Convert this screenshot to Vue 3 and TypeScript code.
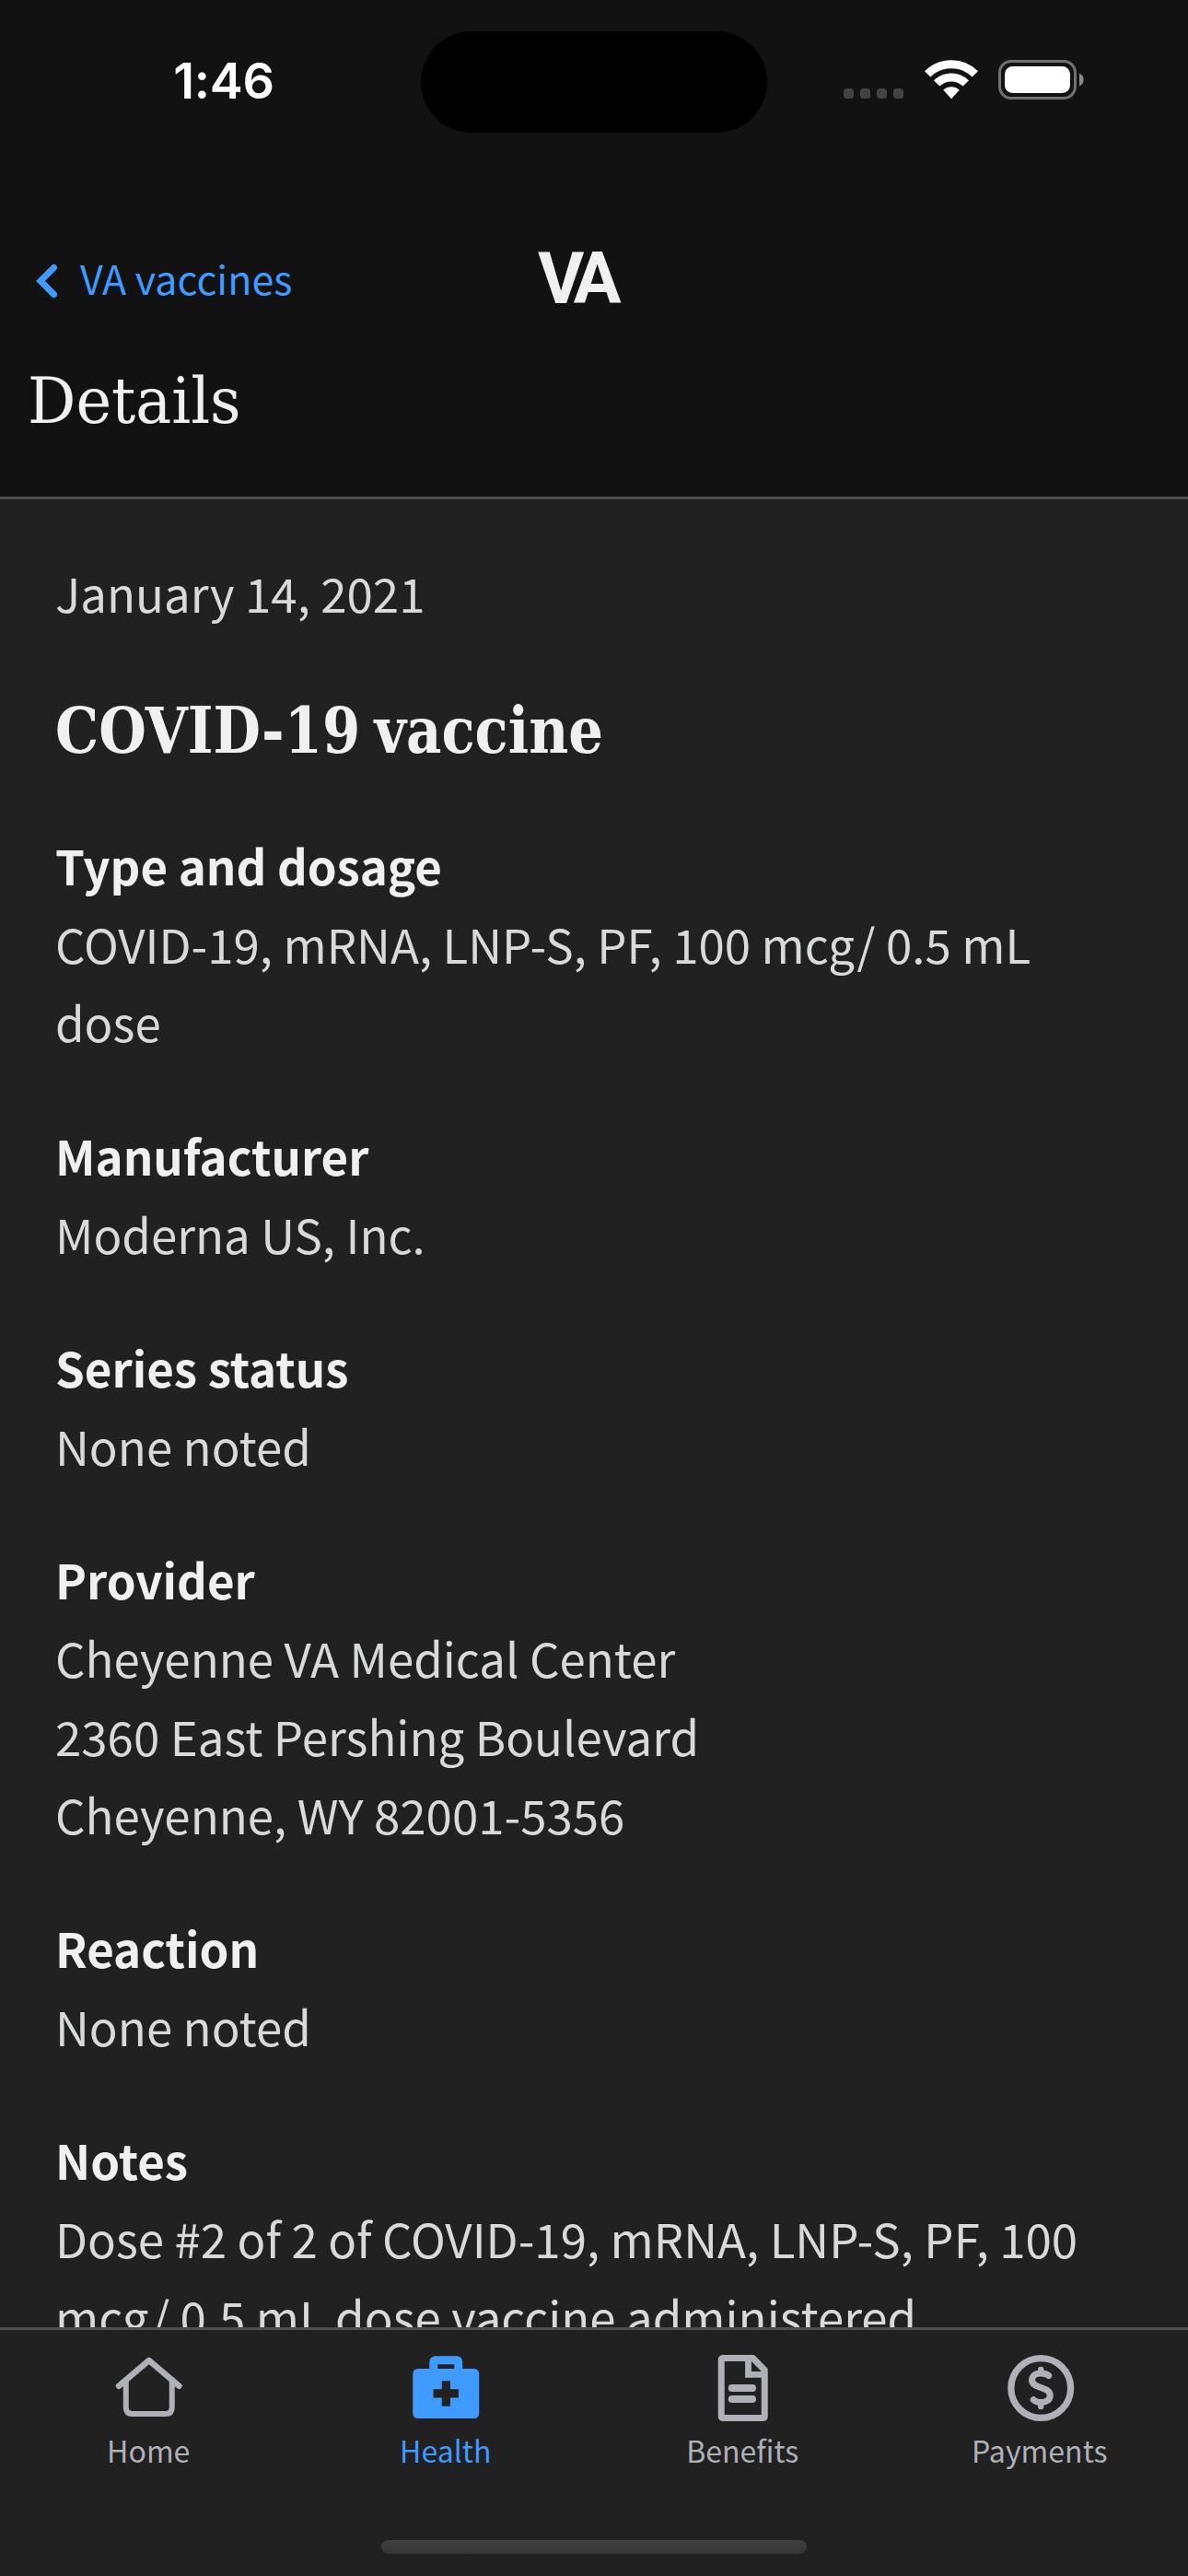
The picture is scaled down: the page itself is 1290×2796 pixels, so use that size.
<script setup lang="ts">
interface Section {
  label: string
  lines: string[]
}

const sections: Section[] = [
  { label: 'Type and dosage', lines: ['COVID-19, mRNA, LNP-S, PF, 100 mcg/ 0.5 mL dose'] },
  { label: 'Manufacturer', lines: ['Moderna US, Inc.'] },
  { label: 'Series status', lines: ['None noted'] },
  {
    label: 'Provider',
    lines: ['Cheyenne VA Medical Center', '2360 East Pershing Boulevard', 'Cheyenne, WY 82001-5356'],
  },
  { label: 'Reaction', lines: ['None noted'] },
  { label: 'Notes', lines: ['Dose #2 of 2 of COVID-19, mRNA, LNP-S, PF, 100 mcg/ 0.5 mL dose vaccine administered'] },
]
</script>

<template>
  <div class="screen">
    <header class="header">
      <div class="status">
        <span class="time">1:46</span>
        <div class="island"></div>
        <div class="indicators">
          <svg width="66" height="11" viewBox="0 0 66 11" class="dots">
            <rect v-for="i in 4" :key="i" :x="(i - 1) * 18" y="0" width="11" height="11" rx="3.5" fill="#434343" />
          </svg>
          <svg width="58" height="43" viewBox="0 0 58 43" class="wifi" fill="none" stroke="#fff">
            <path d="M3.2 15.4 A36.4 36.4 0 0 1 54.8 15.4" stroke-width="9" />
            <path d="M13.2 25.4 A22.4 22.4 0 0 1 44.8 25.4" stroke-width="9" />
            <path d="M20.3 32.8 A12.6 12.6 0 0 1 37.7 32.8 L29 42.2 Z" fill="#fff" stroke="none" />
          </svg>
          <svg width="94" height="43" viewBox="0 0 94 43" class="battery">
            <rect x="1.5" y="1.5" width="82" height="40" rx="12.5" fill="none" stroke="#717171" stroke-width="3" />
            <rect x="7" y="7" width="71" height="29" rx="8.5" fill="#fff" />
            <path d="M88 14.5 a7.6 7.6 0 0 1 0 14 Z" fill="#8a8a8a" />
          </svg>
        </div>
      </div>
      <div class="nav">
        <div class="back">
          <svg width="24" height="38" viewBox="0 0 24 38" class="chevron">
            <path d="M19.5 4.5 L5 19 L19.5 33.5" fill="none" stroke="#3f9bff" stroke-width="7" stroke-linecap="round" />
          </svg>
          <span class="back-label">VA vaccines</span>
        </div>
        <span class="logo">VA</span>
        <span></span>
      </div>
      <h1 class="title"><span>Details</span></h1>
    </header>

    <main class="content">
      <p class="value">January 14, 2021</p>
      <h2 class="name"><span>COVID-19 vaccine</span></h2>
      <section v-for="s in sections" :key="s.label" class="section">
        <h3 class="label">{{ s.label }}</h3>
        <p v-for="l in s.lines" :key="l" class="value">{{ l }}</p>
      </section>
    </main>

    <footer class="footer">
      <nav class="tabs">
        <div class="tab">
          <svg width="80" height="80" viewBox="-0.75 0 80 80" fill="none" stroke="currentColor">
            <path d="M7.3 36.7 L40 9 L72.7 36.7" stroke-width="6.5" stroke-linecap="round" stroke-linejoin="round" />
            <path d="M15 31 V60 Q15 67 22 67 H58 Q65 67 65 60 V31" stroke-width="6" />
          </svg>
          <span>Home</span>
        </div>
        <div class="tab active">
          <svg width="80" height="80" viewBox="-0.25 0 80 80" fill="currentColor" fill-rule="evenodd">
            <path d="M22 18 V11 Q22 4.2 29 4.2 H51 Q58 4.2 58 11 V18 H70 Q76 18 76 24 V66 Q76 72 70 72 H10 Q4 72 4 66 V24 Q4 18 10 18 Z M31 13.3 V18 H49 V13.3 Z M35.5 31.3 V40.3 H26.3 V49.5 H35.5 V58.7 H44.7 V49.5 H53.7 V40.3 H44.7 V31.3 Z" />
          </svg>
          <span>Health</span>
        </div>
        <div class="tab">
          <svg width="80" height="80" viewBox="0 0 80 80" fill="none" stroke="currentColor">
            <path d="M19.5 6.5 H51.5 L64.25 19.5 V69.5 Q64.25 71.5 62 71.5 H19.5 Q17.25 71.5 17.25 69.5 V8.5 Q17.25 6.5 19.5 6.5 Z" stroke-width="7" stroke-linejoin="round" />
            <path d="M46.5 7 V24.3 H63" stroke-width="6.8" />
            <path d="M28.75 39 H51 M28.75 51 H51" stroke-width="8" stroke-linecap="round" />
          </svg>
          <span>Benefits</span>
        </div>
        <div class="tab">
          <svg width="80" height="80" viewBox="-1.25 0 80 80" fill="none" stroke="currentColor" stroke-linecap="round">
            <circle cx="40" cy="39" r="32.4" stroke-width="7.2" />
            <path d="M48.5 25.5 C46 23.5 43.5 23 40 23 C34 23 30.3 26 30.3 30.5 C30.3 40 50 37 50 47 C50 51.8 46 54.6 40.5 54.6 C36.5 54.6 34 53.5 32 51.8" stroke-width="7" />
            <path d="M40 19 V22 M40 56 V59" stroke-width="6.4" />
          </svg>
          <span>Payments</span>
        </div>
      </nav>
      <div class="home-bar"></div>
    </footer>
  </div>
</template>

<style>
body {
  margin: 0;
  background: #212121;
}
</style>

<style scoped>
.screen {
  display: flex;
  flex-direction: column;
  width: 1290px;
  height: 2796px;
  overflow: hidden;
  background: #212121;
  font-family: "Noto Sans CJK SC", "Noto Sans", sans-serif;
}
h1, h2, h3, p {
  margin: 0;
  font-weight: 400;
}
.header {
  box-sizing: border-box;
  flex: none;
  height: 542px;
  background: #121212;
  border-bottom: 3px solid #4f4f4f;
}
.status {
  display: grid;
  grid-template-columns: 457px 376px 457px;
  height: 177px;
  align-items: start;
}
.time {
  justify-self: center;
  margin: 56px 0 0 29px;
  font: 600 54px/63px Inter, sans-serif;
  letter-spacing: -0.3px;
  color: #fff;
}
.island {
  height: 110px;
  margin-top: 34px;
  border-radius: 55px;
  background: #000;
}
.indicators {
  display: flex;
  align-items: flex-start;
  margin-top: 65px;
  padding-left: 83px;
}
.dots { margin-top: 31px; }
.wifi { margin-left: 21.5px; }
.battery { margin-left: 22.5px; }
.nav {
  display: grid;
  grid-template-columns: 584px 92px 1fr;
  align-items: center;
  height: 252px;
  box-sizing: border-box;
  padding: 87px 0 117px;
}
.back {
  display: flex;
  align-items: center;
  padding-left: 39px;
  gap: 24px;
  font-size: 43px;
  line-height: 48px;
  color: #3f9bff;
}
.chevron { margin-top: 3px; }
.back-label { margin-bottom: 4px; }
.logo {
  margin-top: 1px;
  font: 700 77px/77px Roboto, sans-serif;
  letter-spacing: -11.5px;
  font-kerning: none;
  color: #f0f0f0;
  white-space: nowrap;
}
.title {
  height: 90px;
  margin-top: -39px;
  padding-left: 30px;
  font: 400 69px/90px "DejaVu Serif Condensed", "DejaVu Serif", serif;
  font-stretch: condensed;
  color: #f0f0f0;
}
.title span,
.name span {
  display: inline-block;
  transform-origin: 0 50%;
}
.title span { transform: scaleX(1.053); }
.name span {
  transform: scaleX(0.955);
  word-spacing: -5.5px;
}
.content {
  flex: 1;
  min-height: 0;
  overflow: hidden;
  padding: 59px 60px 0;
}
.value,
.label {
  font-size: 51px;
  line-height: 85px;
  color: #d8d9da;
}
.label {
  font-weight: 700;
  color: #f0f0f0;
}
.name {
  margin-top: 57px;
  height: 100px;
  font: 700 69px/100px "DejaVu Serif Condensed", "DejaVu Serif", serif;
  font-stretch: condensed;
  color: #f0f0f0;
  white-space: nowrap;
}
.section { margin-top: 60px; }
.name + .section { margin-top: 54px; }
.footer {
  box-sizing: border-box;
  flex: none;
  display: flex;
  flex-direction: column;
  align-items: center;
  justify-content: space-between;
  height: 270px;
  padding-bottom: 24px;
  border-top: 3px solid #4f4f4f;
}
.tabs {
  display: grid;
  grid-template-columns: repeat(4, 1fr);
  width: 1290px;
}
.tab {
  display: flex;
  flex-direction: column;
  align-items: center;
  padding-top: 24px;
  color: #afb0b8;
}
.tab span {
  margin-top: 1px;
  font-size: 32.1px;
  line-height: 50px;
}
.tab.active { color: #3f9bff; }
.home-bar {
  width: 462px;
  height: 15px;
  border-radius: 8px;
  background: linear-gradient(#404040, #353535);
}
</style>
